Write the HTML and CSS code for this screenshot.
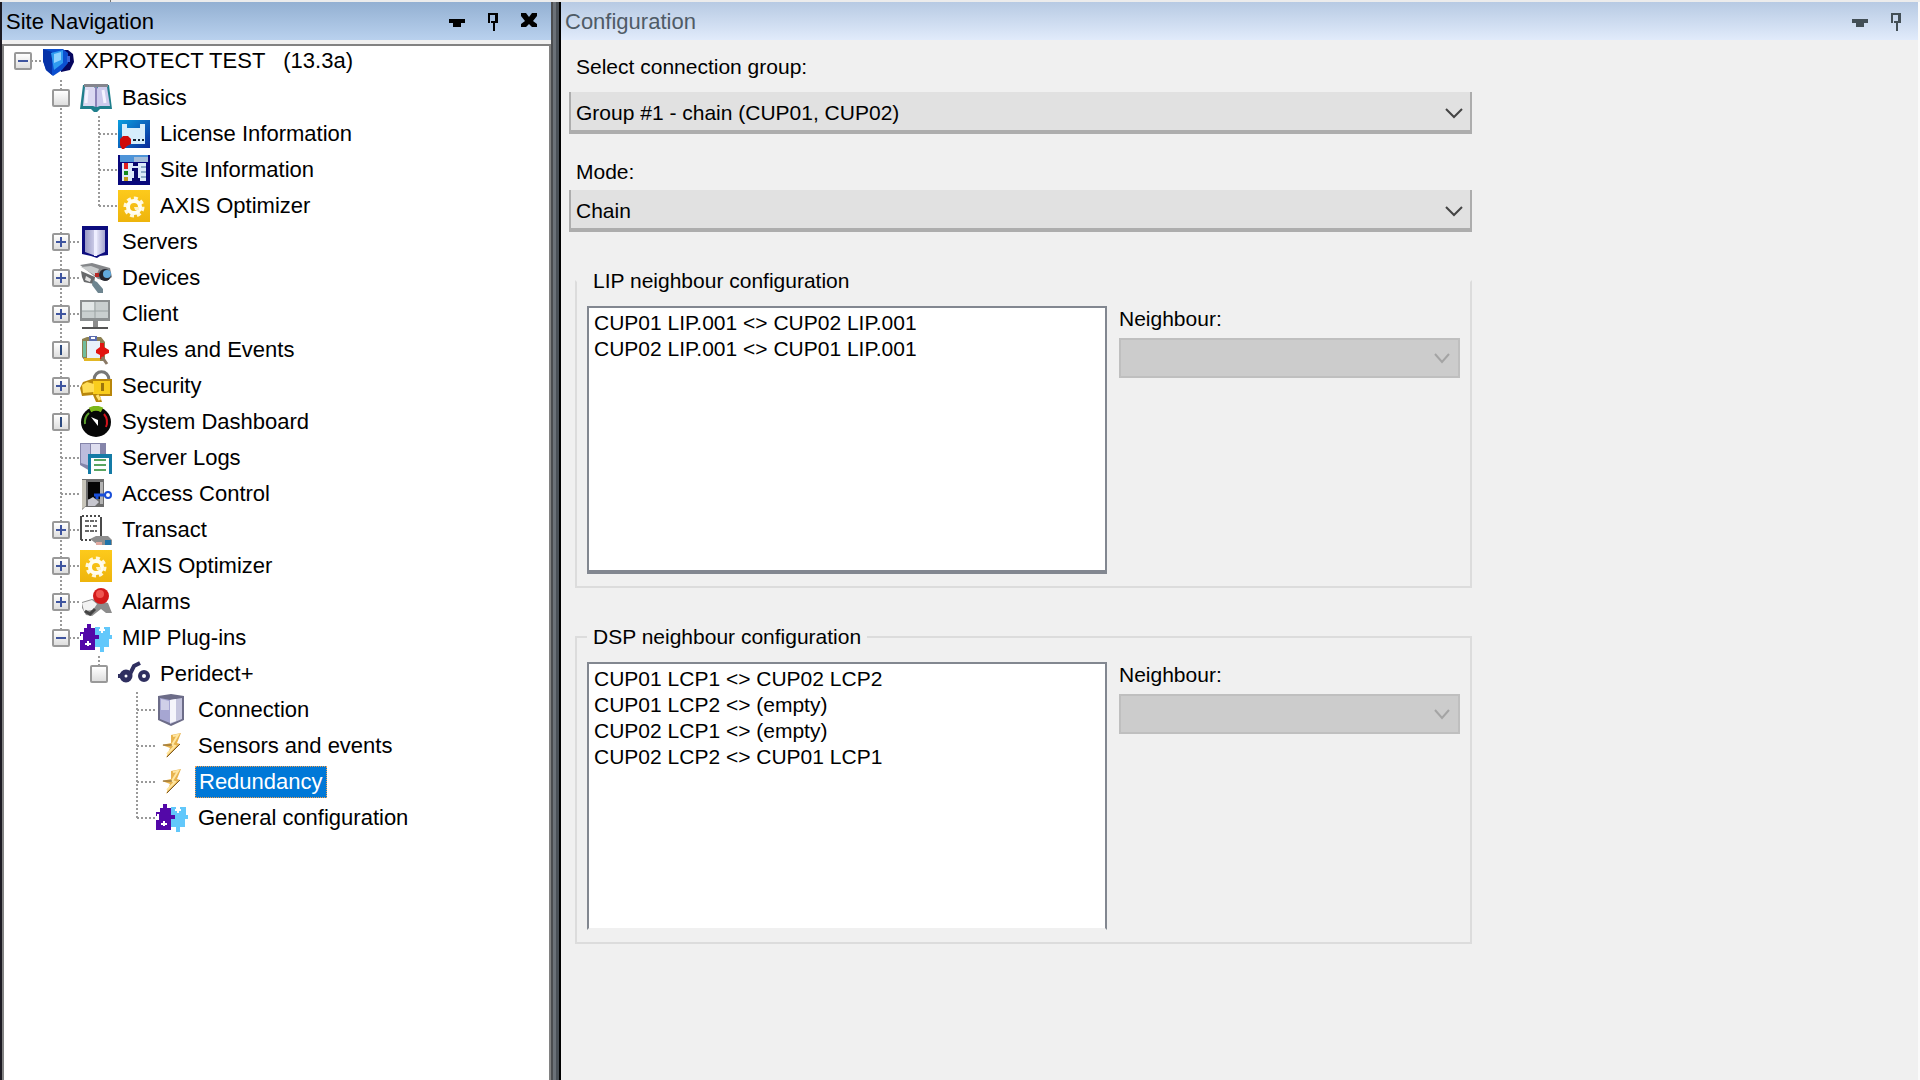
FILE: index.html
```html
<!DOCTYPE html>
<html lang="en">
<head>
  <meta charset="UTF-8" />
  <meta name="viewport" content="width=device-width, initial-scale=1.0"/>
  <title>Configuration</title>
  <link rel="stylesheet" href="styles.css">
</head>
<body>
  <!-- shared icons -->
  <svg class="sprite" aria-hidden="true">
    <defs>
      <linearGradient id="steel"><stop offset="0" stop-color="#9a9ac4"/><stop offset=".45" stop-color="#c9c9e6"/><stop offset=".5" stop-color="#f4f4ff"/><stop offset="1" stop-color="#a3a3d0"/></linearGradient>
      <linearGradient id="gold" x2="0" y2="1"><stop offset="0" stop-color="#fdca1c"/><stop offset="1" stop-color="#eeb40c"/></linearGradient>
      <linearGradient id="sky" x2="1" y2="1"><stop offset="0" stop-color="#0a9fe0"/><stop offset="1" stop-color="#0a2a9a"/></linearGradient>
    </defs>
    <symbol id="i-site" viewBox="0 0 32 32">
      <path d="M18 5h8l5 4 1 8-4 8-9 2z" fill="#06065e"/>
      <path d="M1 4h20l5 4v10l-6 7-9 6-7-6-3-9z" fill="#0b4fd0"/>
      <path d="M1 4l9 3v23l-6-5-3-9z" fill="#0632a8"/>
      <path d="M9 8l12-3v13l-9 7z" fill="#2f9bf0"/>
      <path d="M12 9l7-2v8l-7 3z" fill="#8fd2ff"/>
      <path d="M25 11h3v6h-3z" fill="#3a65d8"/>
    </symbol>
    <symbol id="i-book" viewBox="0 0 32 32">
      <path d="M3 3h26l3 24H20l-3 3h-3l-3-3H0z" fill="#1f7f8c"/>
      <path d="M4 2h24v3H4z" fill="#85868e"/>
      <path d="M5 5h9l2 2v18l-3-1H3z" fill="#dcdaf2"/>
      <path d="M18 5h9l3 19H20l-3 1V7z" fill="#cdcaec"/>
      <path d="M15 5h2v20h-2z" fill="#8b83b8"/>
      <path d="M7 8l-1 13M23 8l2 13" stroke="#f4f3ff" stroke-width="3"/>
    </symbol>
    <symbol id="i-license" viewBox="0 0 32 32">
      <path d="M0 2h32v28H0z" fill="url(#sky)"/>
      <path d="M4 6h5v4h13V6h5v20H4z" fill="#d5edfb"/>
      <path d="M15 22h3M20 22h2M24 22h2" stroke="#123" stroke-width="2"/>
      <path d="M2 21l3-3h5l3 3v5l-4 2-3 3H4l-2-4z" fill="#cf0a0a"/>
    </symbol>
    <symbol id="i-info" viewBox="0 0 32 32">
      <path d="M0 1h32v30H0z" fill="#08087c"/>
      <path d="M2 1h28v7H2z" fill="#4e94d8"/><path d="M16 3h14v5H16z" fill="#a4bcd8"/>
      <path d="M4 9h24v18H4z" fill="#dceafa"/>
      <path d="M6 9h4v6H6z" fill="#e02020"/><path d="M6 17h4v4H6z" fill="#128a20"/><path d="M6 23h4v4H6z" fill="#c09a18"/>
      <path d="M15 9h5v3h-5zM14 14h6v10h2v3h-8v-3h2v-7h-2z" fill="#08086c"/>
      <path d="M23 13h5M23 18h5M23 23h5" stroke="#8fabc8" stroke-width="2"/>
    </symbol>
    <symbol id="i-axis" viewBox="0 0 32 32">
      <path d="M0 0h32v32H0z" fill="url(#gold)"/>
      <circle cx="16" cy="17" r="9" fill="none" stroke="#fff8dc" stroke-width="3" stroke-dasharray="4 3"/>
      <circle cx="16" cy="17" r="6" fill="none" stroke="#fffdf0" stroke-width="4"/>
      <path d="M16 17h5v3h-4z" fill="#fff4c4"/>
    </symbol>
    <symbol id="i-server" viewBox="0 0 32 32">
      <path d="M2 0h26v29l-8 1-3 2-6-2-9-2z" fill="#0c0c7e"/>
      <path d="M5 4h20v22l-9 4-11-4z" fill="url(#steel)"/>
      <path d="M14 4h3v26h-3z" fill="#eef"/>
    </symbol>
    <symbol id="i-box" viewBox="0 0 32 32">
      <path d="M2 2l13-2 13 2v24l-13 6-13-6z" fill="#6c6c88"/>
      <path d="M4 4l10 2v23L4 25z" fill="#a6a6d2"/>
      <path d="M5 5l8 2v9H5z" fill="#cfcfe8"/>
      <path d="M14 6l12-2v21l-12 5z" fill="#c5c5de"/>
      <path d="M14 6l6-1v22l-6 2z" fill="#f5f5fb"/>
    </symbol>
    <symbol id="i-camera" viewBox="0 0 32 32">
      <path d="M0 3l12-2 18 5 2 9-5 4-9-2z" fill="#85878a"/>
      <path d="M1 5l10-1 8 3-3 7z" fill="#c9cccd"/>
      <path d="M1 9l14 6-1 7-10-2-2-5z" fill="#686a6c"/>
      <path d="M6 14l5 3-1 3-5-2z" fill="#e4e4e4"/>
      <circle cx="25" cy="13" r="6" fill="#26262e"/><circle cx="27" cy="12" r="4" fill="#62a9dc"/>
      <path d="M15 11h4v4h-4z" fill="#b62a26"/>
      <path d="M13 18l4 2 6 7v4h-5l-6-8z" fill="#6e8590"/>
    </symbol>
    <symbol id="i-monitor" viewBox="0 0 32 32">
      <path d="M0 2h30v21H0z" fill="#8b8f90"/>
      <path d="M2 4h26v16H2z" fill="#c9cfcf"/><path d="M2 4h12v9H2z" fill="#e2e7e7"/>
      <path d="M15 4v16M2 13h26" stroke="#9ba3a3" stroke-width="1"/>
      <path d="M13 23h5v6h-5z" fill="#8c8c8c"/><path d="M2 29h26v2H2z" fill="#555"/>
    </symbol>
    <symbol id="i-rules" viewBox="0 0 32 32">
      <path d="M2 5l5-2h14l4 5v19H5l-3-4z" fill="#8d8152"/>
      <path d="M3 7h3v16H3z" fill="#70bd9d"/><path d="M7 7h13v17H7z" fill="#e8f1fa"/>
      <path d="M4 24h16v3H4z" fill="#e2b724"/>
      <path d="M9 2h8v5H9z" fill="#5b6cae"/><path d="M11 3h4v2h-4z" fill="#fff"/>
      <path d="M20 9h4v4l5 3v3l-5 2v4h-4v-4l-4-2v-3l4-3z" fill="#e21410"/>
      <path d="M22 23l5 7" stroke="#8a7966" stroke-width="3"/>
    </symbol>
    <symbol id="i-lock" viewBox="0 0 32 32">
      <path d="M14 10c0-11 15-11 15 0" fill="none" stroke="#777" stroke-width="3"/>
      <path d="M12 9h20v17H20l2 6h-6l-3-7-11 1-2-8 3-6z" fill="#b8860b"/>
      <path d="M13 11h17v13H13z" fill="#f9cd1c"/>
      <path d="M2 15l5-3 7 2v8l-11 1z" fill="#ffdd55"/>
      <path d="M21 13h3v8h-3z" fill="#9c750c"/><path d="M17 25l3 5" stroke="#ffe070" stroke-width="3"/>
    </symbol>
    <symbol id="i-dash" viewBox="0 0 32 32">
      <circle cx="16" cy="16" r="15" fill="#060606"/>
      <path d="M5 18a11 12 0 0 1 4-11" fill="none" stroke="#5aa02c" stroke-width="2"/>
      <path d="M10 4a12 12 0 0 1 12 0" fill="none" stroke="#7cb81a" stroke-width="5"/>
      <path d="M24 8a13 13 0 0 1 2 13" fill="none" stroke="#d5141c" stroke-width="2"/>
      <path d="M11 11l7 3v6z" fill="#fff"/>
    </symbol>
    <symbol id="i-logs" viewBox="0 0 32 32">
      <path d="M0 1h26v29l-16-1-10-6z" fill="#8585aa"/>
      <path d="M1 2h9v22l-9-3z" fill="#bcbcdc"/><path d="M11 2h9v22h-9z" fill="#dedeef"/>
      <path d="M8 12h24v20H8z" fill="#147ba6"/><path d="M11 16h18v16H11z" fill="#fff"/>
      <path d="M14 18h12M14 23h12M14 28h12" stroke="#59a560" stroke-width="2"/>
    </symbol>
    <symbol id="i-door" viewBox="0 0 32 32">
      <path d="M2 1h22v28H5l-3 3z" fill="#6c6c6c"/>
      <path d="M2 2h4v26l-4 3z" fill="#c8c5ba"/><path d="M8 4h12v17H8z" fill="#050505"/>
      <path d="M8 22l5-3 6 5-4 4H8z" fill="#c7c7cf"/><path d="M20 4h3v22h-3z" fill="#b3b3b3"/>
      <path d="M14 17h12M17 17v4" stroke="#1a4fd8" stroke-width="3"/>
      <circle cx="28" cy="17" r="3" fill="#fff" stroke="#1a4fd8" stroke-width="2"/>
    </symbol>
    <symbol id="i-transact" viewBox="0 0 32 32">
      <path d="M1 2v24M21 3v20" stroke="#4a4a4a" stroke-width="2"/>
      <path d="M2 2h20M1 26h11" stroke="#4a4a4a" stroke-width="2" stroke-dasharray="2 2"/>
      <path d="M5 7h12M5 12h6M13 12h4M5 17h12" stroke="#6a6a6a" stroke-width="2" stroke-dasharray="4 1"/>
      <path d="M10 25l6-3h12l4 4v5H18z" fill="#8e8e8e"/>
      <path d="M16 28h6v3h-6z" fill="#dfa9a0"/><path d="M25 26h6v5h-6z" fill="#1f72a8"/>
    </symbol>
    <symbol id="i-alarm" viewBox="0 0 32 32">
      <path d="M2 16l10-3 8 2 8 2 4 10h-6l-5-4-9 7-6-1-4-7z" fill="#8c8c8c"/>
      <path d="M2 17l10-3 5 4-4 6-9 1z" fill="#f2f2f2"/>
      <path d="M5 25l5 3 5-5" fill="none" stroke="#444" stroke-width="3"/>
      <circle cx="21" cy="10" r="8" fill="#d31a1a"/><circle cx="20" cy="8" r="4" fill="#f05550"/>
    </symbol>
    <symbol id="i-puzzle" viewBox="0 0 32 32">
      <path d="M4 6h3V2h4v4h4v7h4v4h-4v11H0V18h3v-4H0v-4h4z" fill="#5308a8"/>
      <path d="M15 5h5v4h4V5h6v8h2v4h-3v8h-5v5h-4v-5h-5z" fill="#62c8fb"/>
      <path d="M15 13h4v4h-4z" fill="#5308a8"/>
      <path d="M8 19v5M5 22h6M22 6v5M19 8h6M2 12v4" stroke="#fff" stroke-width="2"/>
    </symbol>
    <symbol id="i-peridect" viewBox="0 0 32 32">
      <circle cx="8" cy="18" r="4" fill="none" stroke="#2f2f60" stroke-width="5"/>
      <circle cx="26" cy="18" r="4" fill="none" stroke="#2f2f60" stroke-width="4"/>
      <path d="M12 16l4-8 6-3M0 18h4" fill="none" stroke="#2f2f60" stroke-width="4"/>
    </symbol>
    <symbol id="i-bolt" viewBox="0 0 32 32">
      <path d="M15 5l10-2-4 10 3 1-14 14 4-10-8-3 9-2z" fill="#e7b34e"/>
      <path d="M17 6l5-1-6 10 3 1-8 8" fill="none" stroke="#ffe6a0" stroke-width="2"/>
      <path d="M7 15h9M11 27l13-13" stroke="#7a5a2c" stroke-width="1"/>
    </symbol>
    <symbol id="i-down" viewBox="0 0 24 24"><path d="M4 10h16v4h-4v4H8v-4H4z"/></symbol>
    <symbol id="i-pin" viewBox="0 0 24 24"><path d="M7 4h10v10h-3v8h-2v-8h-2V6H9v8H7z M10 6v6h4V6z" fill-rule="evenodd"/></symbol>
    <symbol id="i-close" viewBox="0 0 24 24"><path d="M4 4h5l3 4 3-4h5v3l-4 5 4 3v3h-5l-3-3-3 3H4v-3l4-3-4-5z"/></symbol>
  </svg>

  <div class="topbar"><span class="tick"></span></div>
  <div class="app">
    <nav class="sidebar">
      <div class="titlebar">
        <h2>Site Navigation</h2>
        <button type="button" aria-label="Window menu"><svg><use href="#i-down"/></svg></button>
        <button type="button" aria-label="Auto hide"><svg><use href="#i-pin"/></svg></button>
        <button type="button" aria-label="Close"><svg><use href="#i-close"/></svg></button>
      </div>
      <div class="tree-box">
        <ul class="tree root">
          <li>
            <div class="row"><span class="cell"><button class="toggle minus" aria-label="Collapse site"></button></span><svg class="icon"><use href="#i-site"/></svg><a href="#">XPROTECT TEST &nbsp; (13.3a)</a></div>
            <ul class="tree">
              <li>
                <div class="row"><span class="cell no-line"><button class="toggle" aria-label="Collapse Basics"></button></span><svg class="icon"><use href="#i-book"/></svg><a href="#">Basics</a></div>
                <ul class="tree">
                  <li><div class="row"><span class="cell"></span><svg class="icon"><use href="#i-license"/></svg><a href="#">License Information</a></div></li>
                  <li><div class="row"><span class="cell"></span><svg class="icon"><use href="#i-info"/></svg><a href="#">Site Information</a></div></li>
                  <li><div class="row"><span class="cell"></span><svg class="icon"><use href="#i-axis"/></svg><a href="#">AXIS Optimizer</a></div></li>
                </ul>
              </li>
              <li><div class="row"><span class="cell"><button class="toggle plus" aria-label="Expand Servers"></button></span><svg class="icon"><use href="#i-server"/></svg><a href="#">Servers</a></div></li>
              <li><div class="row"><span class="cell"><button class="toggle plus" aria-label="Expand Devices"></button></span><svg class="icon"><use href="#i-camera"/></svg><a href="#">Devices</a></div></li>
              <li><div class="row"><span class="cell"><button class="toggle plus" aria-label="Expand Client"></button></span><svg class="icon"><use href="#i-monitor"/></svg><a href="#">Client</a></div></li>
              <li><div class="row"><span class="cell no-line"><button class="toggle bar" aria-label="Expand Rules and Events"></button></span><svg class="icon"><use href="#i-rules"/></svg><a href="#">Rules and Events</a></div></li>
              <li><div class="row"><span class="cell"><button class="toggle plus" aria-label="Expand Security"></button></span><svg class="icon"><use href="#i-lock"/></svg><a href="#">Security</a></div></li>
              <li><div class="row"><span class="cell no-line"><button class="toggle bar" aria-label="Expand System Dashboard"></button></span><svg class="icon"><use href="#i-dash"/></svg><a href="#">System Dashboard</a></div></li>
              <li><div class="row"><span class="cell"></span><svg class="icon"><use href="#i-logs"/></svg><a href="#">Server Logs</a></div></li>
              <li><div class="row"><span class="cell"></span><svg class="icon"><use href="#i-door"/></svg><a href="#">Access Control</a></div></li>
              <li><div class="row"><span class="cell"><button class="toggle plus" aria-label="Expand Transact"></button></span><svg class="icon"><use href="#i-transact"/></svg><a href="#">Transact</a></div></li>
              <li><div class="row"><span class="cell"><button class="toggle plus" aria-label="Expand AXIS Optimizer"></button></span><svg class="icon"><use href="#i-axis"/></svg><a href="#">AXIS Optimizer</a></div></li>
              <li><div class="row"><span class="cell"><button class="toggle plus" aria-label="Expand Alarms"></button></span><svg class="icon"><use href="#i-alarm"/></svg><a href="#">Alarms</a></div></li>
              <li>
                <div class="row"><span class="cell"><button class="toggle minus" aria-label="Collapse MIP Plug-ins"></button></span><svg class="icon"><use href="#i-puzzle"/></svg><a href="#">MIP Plug-ins</a></div>
                <ul class="tree">
                  <li>
                    <div class="row"><span class="cell no-line"><button class="toggle" aria-label="Collapse Peridect+"></button></span><svg class="icon"><use href="#i-peridect"/></svg><a href="#">Peridect+</a></div>
                    <ul class="tree">
                      <li><div class="row"><span class="cell"></span><svg class="icon"><use href="#i-box"/></svg><a href="#">Connection</a></div></li>
                      <li><div class="row"><span class="cell"></span><svg class="icon"><use href="#i-bolt"/></svg><a href="#">Sensors and events</a></div></li>
                      <li><div class="row"><span class="cell"></span><svg class="icon"><use href="#i-bolt"/></svg><a href="#" class="selected">Redundancy</a></div></li>
                      <li><div class="row"><span class="cell"></span><svg class="icon"><use href="#i-puzzle"/></svg><a href="#">General configuration</a></div></li>
                    </ul>
                  </li>
                </ul>
              </li>
            </ul>
          </li>
        </ul>
      </div>
    </nav>
    <div class="splitter"></div>
    <main class="content">
      <div class="titlebar light">
        <h2>Configuration</h2>
        <button type="button" aria-label="Window menu"><svg><use href="#i-down"/></svg></button>
        <button type="button" aria-label="Auto hide"><svg><use href="#i-pin"/></svg></button>
      </div>
      <form class="config">
        <label class="field-label first" for="group">Select connection group:</label>
        <select class="combo" id="group"><option>Group #1 - chain (CUP01, CUP02)</option></select>
        <label class="field-label" for="mode">Mode:</label>
        <select class="combo" id="mode"><option>Chain</option></select>

        <fieldset class="group no-top">
          <legend id="lip">LIP neighbour configuration</legend>
          <div class="columns">
            <select class="list" size="10" aria-labelledby="lip">
              <option>CUP01 LIP.001 &lt;&gt; CUP02 LIP.001</option>
              <option>CUP02 LIP.001 &lt;&gt; CUP01 LIP.001</option>
            </select>
            <div>
              <label for="lipNeighbour">Neighbour:</label>
              <select class="neighbour" id="lipNeighbour" disabled></select>
            </div>
          </div>
        </fieldset>

        <fieldset class="group">
          <legend id="dsp">DSP neighbour configuration</legend>
          <div class="columns">
            <select class="list open" size="10" aria-labelledby="dsp">
              <option>CUP01 LCP1 &lt;&gt; CUP02 LCP2</option>
              <option>CUP01 LCP2 &lt;&gt; (empty)</option>
              <option>CUP02 LCP1 &lt;&gt; (empty)</option>
              <option>CUP02 LCP2 &lt;&gt; CUP01 LCP1</option>
            </select>
            <div>
              <label for="dspNeighbour">Neighbour:</label>
              <select class="neighbour" id="dspNeighbour" disabled></select>
            </div>
          </div>
        </fieldset>
      </form>
    </main>
  </div>
</body>
</html>
```

FILE: styles.css
```css
* {
  box-sizing: border-box;
}
body {
  margin: 0;
  height: 100vh;
  display: flex;
  flex-direction: column;
  background: #f0f0f0;
  color: #000;
  font-family: "Liberation Sans", Arial, sans-serif;
  font-size: 22px;
  line-height: 26px;
}
.sprite {
  width: 0;
  height: 0;
  flex: none;
}
.topbar {
  height: 2px;
  padding-left: 110px;
  background: #ececec;
}
.tick {
  display: block;
  width: 1px;
  height: 2px;
  background: #777;
}
.app {
  flex: 1;
  display: flex;
  min-height: 0;
}

/* docked panes */
.sidebar {
  width: 551px;
  flex: none;
  display: flex;
  flex-direction: column;
  border-left: 2px solid #1c1a22;
}
.splitter {
  width: 10px;
  flex: none;
  background: linear-gradient(90deg, #4b4d50 2px, #6b7178 2px, #6b7178 5px, #4a5057 5px, #4a5057 8px, #000 8px);
}
.content {
  flex: 1;
  min-width: 0;
  border-right: 2px solid #fafafa;
}
.titlebar {
  height: 38px;
  flex: none;
  display: flex;
  align-items: center;
  gap: 12px;
  padding: 0 10px 0 4px;
  background: linear-gradient(#93b0d2, #b9d1ee);
}
.titlebar h2 {
  flex: 1;
  margin: 0;
  padding-top: 2px;
  font-size: 22px;
  font-weight: normal;
}
.titlebar button {
  width: 24px;
  height: 24px;
  padding: 0;
  border: 0;
  background: none;
}
.titlebar svg {
  display: block;
  width: 24px;
  height: 24px;
}
.light {
  background: linear-gradient(#b7cae3, #e1ebfb);
}
.light h2 {
  color: #4f5b66;
}
.light svg {
  fill: #434f56;
}

/* tree */
.tree-box {
  flex: 1;
  margin-top: 4px;
  border: 2px solid #828282;
  border-bottom: 0;
  background: #fff;
  overflow: hidden;
}
.tree {
  list-style: none;
  margin: 0;
  padding: 0 0 0 38px;
}
.tree.root {
  padding: 0;
}
.tree li {
  background: repeating-linear-gradient(#999 0 2px, #fff 2px 4px) 18px 0 / 2px 100% no-repeat;
}
.tree li:last-child {
  background-size: 2px 18px;
}
.tree.root > li {
  background: none;
}
.row {
  height: 36px;
  display: flex;
  align-items: center;
}
.root > li > .row {
  height: 30px;
  margin-bottom: 4px;
}
.cell {
  width: 38px;
  height: 18px;
  padding-left: 10px;
  background: repeating-linear-gradient(90deg, #999 0 2px, transparent 2px 4px) 19px 8px / 18px 2px no-repeat;
}
.no-line {
  background: none;
}
.toggle {
  display: block;
  width: 18px;
  height: 18px;
  padding: 0;
  border: 2px solid #999;
  border-radius: 2px;
  background: linear-gradient(#fff, #dedede);
}
.minus {
  background: linear-gradient(#3f559f, #3f559f) center / 10px 2px no-repeat, linear-gradient(#fff, #dedede);
}
.bar {
  background: linear-gradient(#2c4a80, #2c4a80) center / 2px 10px no-repeat, linear-gradient(#fff, #dedede);
}
.plus {
  background: linear-gradient(#3f559f, #3f559f) center / 10px 2px no-repeat, linear-gradient(#3f559f, #3f559f) center / 2px 10px no-repeat, linear-gradient(#fff, #dedede);
}
.icon {
  width: 32px;
  height: 32px;
  flex: none;
}
.row a {
  margin-left: 7px;
  padding: 2px 3px;
  border: 1px solid transparent;
  border-left: 0;
  color: #000;
  text-decoration: none;
  white-space: nowrap;
}
.row .selected {
  background: #0078d7;
  border: 1px dotted #f0a050;
  color: #fff;
}

/* configuration form */
.config {
  max-width: 911px;
  padding: 14px 0 0 8px;
  font-size: 21px;
}
.config label {
  display: block;
}
.config .field-label {
  margin: 25px 0 5px;
  padding-left: 7px;
}
.config .first {
  margin: 0 0 12px;
}
select {
  display: block;
  width: 100%;
  margin: 0;
  border-radius: 0;
  color: #000;
  font: inherit;
}
.combo,
.neighbour {
  appearance: none;
  background: #e1e1e1 url("data:image/svg+xml,%3Csvg xmlns='http://www.w3.org/2000/svg' width='18' height='12'%3E%3Cpath d='M1 2l8 8 8-8' fill='none' stroke='%23444' stroke-width='2'/%3E%3C/svg%3E") right 7px top 15px no-repeat;
}
.combo {
  height: 42px;
  padding: 4px 32px 0 5px;
  border: 2px solid #adadad;
  border-top: 0;
  border-bottom-width: 4px;
}
.group {
  min-width: 0;
  margin: 36px 0 0 6px;
  padding: 12px 10px;
  border: 2px solid #dcdcdc;
}
.no-top {
  border-top-color: transparent;
}
.group legend {
  padding: 0 6px;
}
.columns {
  display: grid;
  grid-template-columns: 520fr 341fr;
  gap: 12px;
}
.list {
  height: 268px;
  padding: 3px 0 0;
  border: 2px solid #828790;
  border-bottom-width: 4px;
  background: #fff;
  overflow: hidden;
}
.open {
  border-bottom: 2px solid #f0f0f0;
}
.list option {
  min-height: 26px;
  padding: 0 5px;
  line-height: 26px;
}
.neighbour {
  height: 40px;
  margin-top: 6px;
  border: 2px solid #bfbfbf;
  background-color: #ccc;
  background-image: url("data:image/svg+xml,%3Csvg xmlns='http://www.w3.org/2000/svg' width='18' height='12'%3E%3Cpath d='M2 2l7 8 7-8' fill='none' stroke='%23a4a4a4' stroke-width='2'/%3E%3C/svg%3E");
  background-position: right 7px center;
  opacity: 1;
}
```
